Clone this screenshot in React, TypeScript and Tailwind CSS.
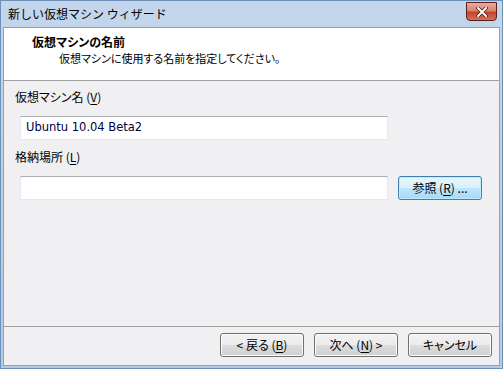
const jpBase = "font-['Noto_Sans_CJK_JP','Noto_Sans',sans-serif]";
const jp = `${jpBase} [font-feature-settings:'palt']`;

function U({ children }: { children: React.ReactNode }) {
  return <span className="underline underline-offset-2">{children}</span>;
}

function VistaButton({ children, focused }: { children: React.ReactNode; focused?: boolean }) {
  return (
    <button
      className={`h-[24px] rounded-[3px] border text-[12px] text-black leading-none ${jp} ${
        focused
          ? "border-[#3c7fb1] bg-[linear-gradient(to_bottom,#eaf6fd_0%,#d9f0fc_50%,#bee6fd_51%,#a7d9f5_100%)] shadow-[inset_0_0_0_1px_#b9ecfd]"
          : "border-[#707070] bg-[linear-gradient(to_bottom,#f2f2f2_0%,#ebebeb_50%,#dddddd_51%,#cfcfcf_100%)] shadow-[inset_0_0_0_1px_#fcfcfc]"
      }`}
    >
      {children}
    </button>
  );
}

export default function App() {
  return (
    <div className="w-[503px] h-[369px] flex flex-col bg-[linear-gradient(to_bottom,#c3d6ec,#b4cbe6)] border border-[#6d8fb8] px-[2px] pb-[2px]">
      {/* title bar */}
      <div className="h-[26px] flex items-center justify-between shrink-0">
        <span className={`pl-[5px] text-[12px] text-black ${jpBase}`}>新しい仮想マシン ウィザード</span>
        <div className="w-[31px] h-[19px] -mt-[5px] mr-[3px] rounded-b-[4px] border border-[#5a1f17] bg-[linear-gradient(to_bottom,#e9ada0_0%,#d88470_45%,#c5452c_55%,#d6705a_100%)] flex items-center justify-center">
          <svg width="12" height="10" viewBox="0 0 12 10">
            <path d="M2 1 L10 9 M10 1 L2 9" stroke="#3d1a14" strokeWidth="3.4" strokeLinecap="square" />
            <path d="M2 1 L10 9 M10 1 L2 9" stroke="#ffffff" strokeWidth="2" strokeLinecap="square" />
          </svg>
        </div>
      </div>

      <div className="flex-1 flex flex-col border border-[#8aa3c2] bg-[#f0f0f0]">
        {/* header */}
        <div className="h-[53px] bg-white border-b border-[#a0a0a0] shrink-0 pt-[6px]">
          <div className={`pl-[28px] text-[12px] font-bold text-black leading-[16px] ${jp}`}>仮想マシンの名前</div>
          <div className={`pl-[55px] text-[11px] text-black leading-[16px] ${jp}`}>仮想マシンに使用する名前を指定してください。</div>
        </div>

        {/* body */}
        <div className="flex-1 flex flex-col pl-[16px] pt-[8px] bg-[#f0eff2]">
          <div className={`-ml-[5px] text-[12px] text-black leading-[16px] ${jp}`}>
            仮想マシン名 (<U>V</U>)
          </div>
          <div className="mt-[11px] w-[368px] h-[24px] bg-white border border-[#e3e9ef] border-t-[#abadb3] flex items-center pl-[5px]">
            <span className="font-['DejaVu_Sans',sans-serif] text-[11.5px] text-[#000040]">Ubuntu 10.04 Beta2</span>
          </div>
          <div className={`mt-[9px] -ml-[5px] text-[12px] text-black leading-[16px] ${jp}`}>
            格納場所 (<U>L</U>)
          </div>
          <div className="mt-[11px] flex items-center gap-[10px]">
            <div className="w-[368px] h-[24px] bg-white border border-[#e3e9ef] border-t-[#abadb3]" />
            <div className="flex">
              <VistaButton focused>
                <span className="block w-[82px]">参照 (<U>R</U>) ...</span>
              </VistaButton>
            </div>
          </div>
        </div>

        {/* footer */}
        <div className="h-[39px] shrink-0 border-t border-[#a0a0a0] bg-[#f0eff2] flex items-start justify-end gap-[10px] pt-[6px] pr-[7px]">
          <VistaButton>
            <span className="block w-[82px]">&lt; 戻る (<U>B</U>)</span>
          </VistaButton>
          <VistaButton>
            <span className="block w-[82px]">次へ (<U>N</U>) &gt;</span>
          </VistaButton>
          <VistaButton>
            <span className="block w-[82px]">キャンセル</span>
          </VistaButton>
        </div>
      </div>
    </div>
  );
}
